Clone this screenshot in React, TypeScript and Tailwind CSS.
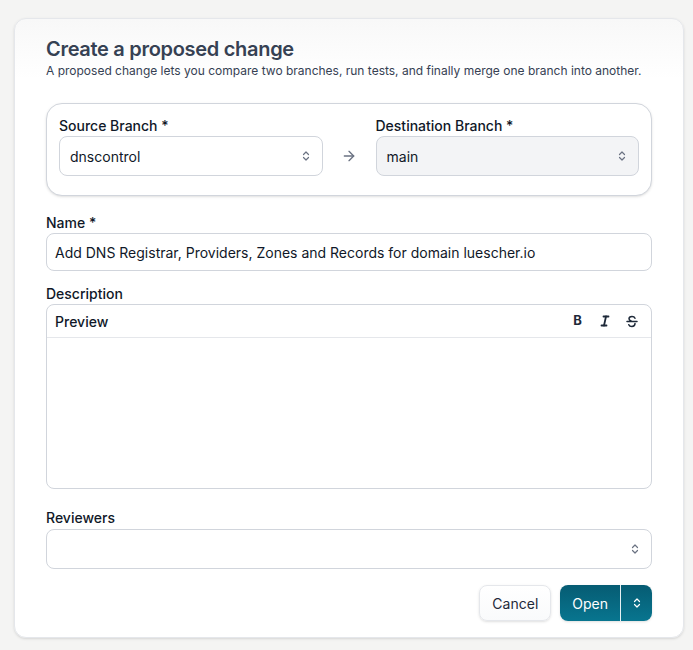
import React from "react";

function Chevrons({ className = "" }: { className?: string }) {
  return (
    <svg width="8" height="12" viewBox="0 0 8 12" fill="none" className={className}>
      <path d="M1.5 4.5L4 2L6.5 4.5" stroke="currentColor" strokeWidth="1.2" strokeLinecap="round" strokeLinejoin="round" />
      <path d="M1.5 7.5L4 10L6.5 7.5" stroke="currentColor" strokeWidth="1.2" strokeLinecap="round" strokeLinejoin="round" />
    </svg>
  );
}

function SelectBox({ value, muted }: { value: string; muted?: boolean }) {
  return (
    <div
      className={`flex h-10 items-center justify-between rounded-lg border border-gray-300 px-2.5 text-[14px] text-gray-900 ${
        muted ? "bg-gray-100" : "bg-white"
      }`}
    >
      <span>{value}</span>
      <Chevrons className="mr-0.5 text-gray-500" />
    </div>
  );
}

export default function App() {
  return (
    <div
      className="min-h-[650px] w-full bg-[#f4f4f3] pl-[14px] pr-[9px] pt-[18px]"
      style={{ fontFamily: "Inter, 'Noto Sans', sans-serif" }}
    >
      <div className="rounded-xl border border-gray-200 bg-gradient-to-b from-[#f8f8f8] to-white to-[60px] px-[31px] pb-4 pt-[16px] shadow-sm">
        <h1 className="text-[20px] font-semibold leading-7 tracking-[-0.3px] text-gray-700">Create a proposed change</h1>
        <p className="text-[12px] leading-4 text-gray-700">
          A proposed change lets you compare two branches, run tests, and finally merge one branch into another.
        </p>

        <div className="mt-[24px] flex items-end rounded-2xl border border-gray-300 bg-white px-3 pb-[19px] pt-[12px] shadow-sm">
          <div className="flex flex-1 flex-col">
            <label className="text-[14px] font-medium leading-5 text-gray-900">Source Branch *</label>
            <SelectBox value="dnscontrol" />
          </div>
          <div className="flex h-10 w-[53px] items-center justify-center text-gray-500">
            <svg width="16" height="16" viewBox="0 0 24 24" fill="none" stroke="currentColor" strokeWidth="2" strokeLinecap="round" strokeLinejoin="round">
              <path d="M5 12h14" />
              <path d="M12 5l7 7-7 7" />
            </svg>
          </div>
          <div className="flex flex-1 flex-col">
            <label className="text-[14px] font-medium leading-5 text-gray-900">Destination Branch *</label>
            <SelectBox value="main" muted />
          </div>
        </div>

        <div className="mt-[17px] flex flex-col">
          <label className="text-[14px] font-medium leading-5 text-gray-900">Name *</label>
          <div className="flex h-[38px] items-center rounded-lg border border-gray-300 bg-white px-2 text-[14px] text-gray-900">
            Add DNS Registrar, Providers, Zones and Records for domain luescher.io
          </div>
        </div>

        <div className="mt-[13px] flex flex-col">
          <label className="text-[14px] font-medium leading-5 text-gray-900">Description</label>
          <div className="flex h-[185px] flex-col rounded-lg border border-gray-300 bg-white">
            <div className="flex h-[33px] items-center justify-between border-b border-gray-200 px-2">
              <span className="text-[14px] font-medium text-gray-900">Preview</span>
              <div className="flex items-center gap-[14px] pr-[5px] text-gray-800">
                <span className="flex w-[13px] justify-center text-[13px] font-bold">B</span>
                <span className="flex w-[13px] justify-center">
                  <svg width="12" height="12" viewBox="0 0 12 12" fill="none" stroke="currentColor" strokeWidth="1.8" strokeLinecap="round">
                    <path d="M4.5 1.5h5" />
                    <path d="M2.5 10.5h5" />
                    <path d="M7 1.5L5 10.5" />
                  </svg>
                </span>
                <span className="flex w-[13px] justify-center">
                  <svg width="12" height="13" viewBox="0 0 12 13" fill="none" stroke="currentColor" strokeWidth="1.5" strokeLinecap="round">
                    <path d="M9 3.2C8.6 2.2 7.5 1.5 6 1.5 4.2 1.5 3 2.4 3 3.8c0 1.1.8 1.8 2 2.2" />
                    <path d="M9 8.6c0 1.8-1.4 2.9-3.1 2.9-1.6 0-2.7-.7-3.1-1.8" />
                    <path d="M1 6.5h10" />
                  </svg>
                </span>
              </div>
            </div>
            <div className="flex-1" />
          </div>
        </div>

        <div className="mt-[19px] flex flex-col">
          <label className="text-[14px] font-medium leading-5 text-gray-900">Reviewers</label>
          <div className="mt-px flex h-10 items-center justify-end rounded-lg border border-gray-300 bg-white px-2.5">
            <Chevrons className="mr-0.5 text-gray-500" />
          </div>
        </div>

        <div className="mt-[16px] flex justify-end gap-[9px]">
          <button className="h-[36px] rounded-lg border border-gray-200 bg-gradient-to-b from-white to-gray-50 px-3 text-[14px] text-gray-800 shadow-sm">
            Cancel
          </button>
          <div className="flex h-[36px] overflow-hidden rounded-lg bg-gradient-to-b from-[#065c73] to-[#08758f] text-white shadow-sm">
            <button className="px-3 text-[14px]">Open</button>
            <div className="w-px bg-white/90" />
            <button className="flex w-[31px] items-center justify-center">
              <Chevrons className="text-white" />
            </button>
          </div>
        </div>
      </div>
    </div>
  );
}
